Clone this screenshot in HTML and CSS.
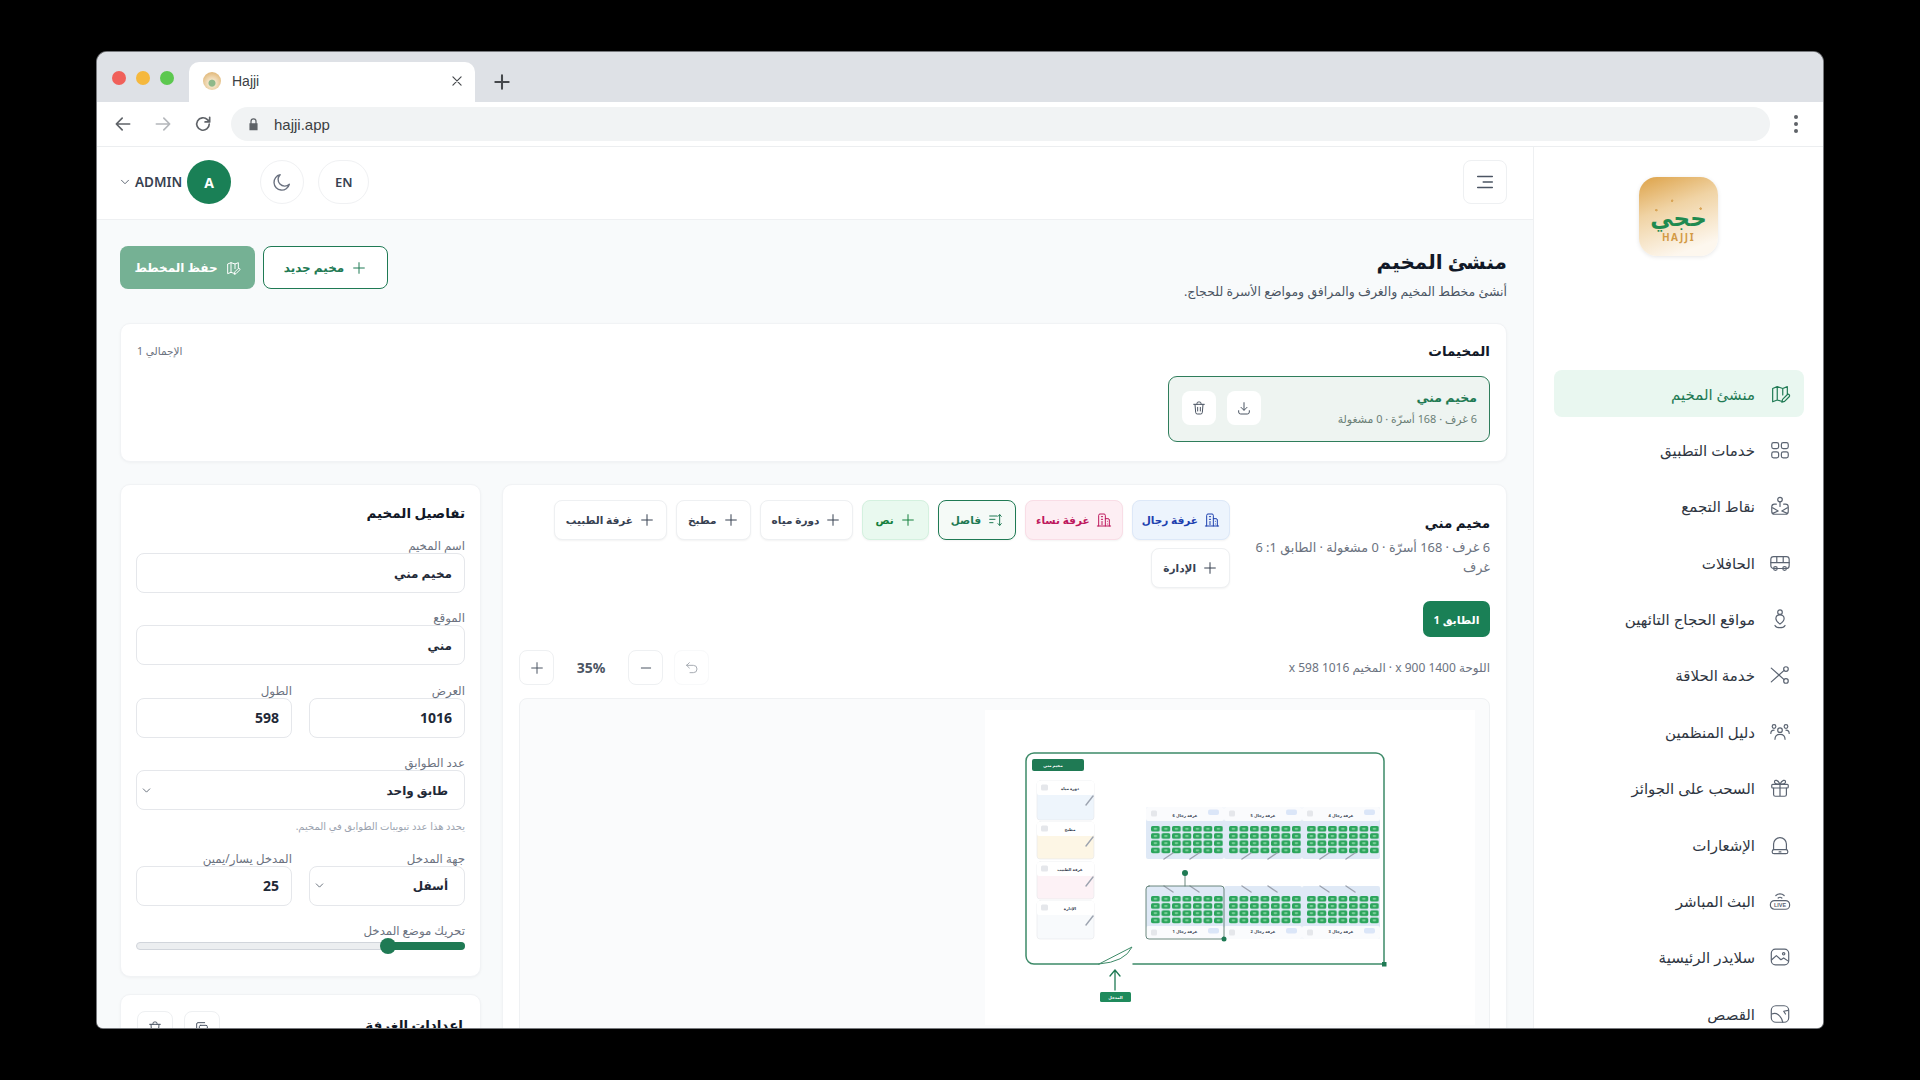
FILE: index.html
```html
<!DOCTYPE html>
<html lang="ar">
<head>
  <meta charset="UTF-8">
  <title>Hajji</title>
  <link rel="stylesheet" href="styles.css">
</head>
<body>
  <svg class="sprite" xmlns="http://www.w3.org/2000/svg">
    <symbol id="i-plus" viewBox="0 0 24 24"><path d="M12 4v16M4 12h16"/></symbol>
    <symbol id="i-map" viewBox="0 0 24 24"><path d="M15 20.5l-6-2-5 2V6l5-2 6 2 5-2v8M9 4v14.500M15 6v7M14 21l.8-3.200 5-5a1.500 1.500 0 0 1 2.200 2.200l-5 5z"/></symbol>
    <symbol id="i-building" viewBox="0 0 24 24"><path d="M4 21V5a2 2 0 0 1 2-2h6a2 2 0 0 1 2 2v16M14 10h4a2 2 0 0 1 2 2v9M2 21h20M8 7h2M8 11h2M8 15h2M8 18h2M17 14h0M17 18h0"/></symbol>
    <symbol id="i-chev" viewBox="0 0 24 24"><path d="M6 9l6 6 6-6"/></symbol>
  </svg>

  <div class="window">
    <div class="tabstrip">
      <div class="lights"><span class="light red"></span><span class="light yellow"></span><span class="light green"></span></div>
      <div class="tab">
        <span class="favicon"></span>
        <span class="tab-title">Hajji</span>
        <svg class="tab-close" viewBox="0 0 24 24"><path d="M5 5l14 14M19 5L5 19"/></svg>
      </div>
      <svg class="new-tab" viewBox="0 0 24 24"><use href="#i-plus"/></svg>
    </div>
    <div class="toolbar">
      <svg class="nav-btn" viewBox="0 0 24 24"><path d="M20 12H4M11 5l-7 7 7 7"/></svg>
      <svg class="nav-btn off" viewBox="0 0 24 24"><path d="M4 12h16M13 5l7 7-7 7"/></svg>
      <svg class="nav-btn" viewBox="0 0 24 24"><path d="M19.500 12a7.500 7.500 0 1 1-2.200-5.300L20 9.500M20 4v5.500h-5.500"/></svg>
      <div class="omnibox">
        <svg class="lock" viewBox="0 0 24 24"><path d="M7 10V7a5 5 0 0 1 10 0v3h1.500v11h-13V10zm2 0h6V7a3 3 0 0 0-6 0z"/></svg>
        <span>hajji.app</span>
      </div>
      <div class="dots"><i></i><i></i><i></i></div>
    </div>

    <div class="app" dir="rtl">
      <aside class="sidebar">
        <div class="logo">
          <span class="logo-ar">حجي</span>
          <span class="logo-en">HAJJI</span>
        </div>
        <nav class="nav">
          <a class="nav-item active">
            <svg class="icon" viewBox="0 0 24 24"><use href="#i-map"/></svg>منشئ المخيم
          </a>
          <a class="nav-item">
            <svg class="icon" viewBox="0 0 24 24"><rect x="3" y="4" width="7.500" height="6.500" rx="2"/><rect x="13.500" y="4" width="7.500" height="6.500" rx="2"/><rect x="3" y="14" width="7.500" height="6.500" rx="2"/><rect x="13.500" y="14" width="7.500" height="6.500" rx="2"/></svg>خدمات التطبيق
          </a>
          <a class="nav-item">
            <svg class="icon" viewBox="0 0 24 24"><circle cx="12" cy="5" r="2.500"/><path d="M12 7.500v5M8 10H6a3 3 0 0 0-3 3v5a3 3 0 0 0 3 3h12a3 3 0 0 0 3-3v-5a3 3 0 0 0-3-3h-2M4 14l6 3.500L4 20M20 14l-6 3.500 6 2.500"/></svg>نقاط التجمع
          </a>
          <a class="nav-item">
            <svg class="icon" viewBox="0 0 24 24"><rect x="2" y="5" width="20" height="13" rx="3"/><path d="M2 11.500h20M8.500 5v6.500M15.500 5v6.500"/><circle cx="7" cy="18" r="2"/><circle cx="17" cy="18" r="2"/></svg>الحافلات
          </a>
          <a class="nav-item">
            <svg class="icon" viewBox="0 0 24 24"><circle cx="12" cy="4.500" r="2.500"/><path d="M12 7.500c-3 0-4.500 2-4.500 4 0 2.500 3 5 4.500 6 1.500-1 4.500-3.500 4.500-6 0-2-1.500-4-4.500-4zM6.500 19c1 2 3.500 2.500 5.500 2.500s4.500-.5 5.500-2.500"/></svg>مواقع الحجاج التائهين
          </a>
          <a class="nav-item">
            <svg class="icon" viewBox="0 0 24 24"><circle cx="18.500" cy="5.500" r="2.500"/><circle cx="18.500" cy="18.500" r="2.500"/><path d="M2.500 4.500L16.500 17M2.500 19.500L16.500 7"/></svg>خدمة الحلاقة
          </a>
          <a class="nav-item">
            <svg class="icon" viewBox="0 0 24 24"><circle cx="12" cy="10" r="2.500"/><circle cx="5.500" cy="6" r="2"/><circle cx="18.500" cy="6" r="2"/><path d="M6.500 20c0-3.500 2.500-5.500 5.500-5.500s5.500 2 5.500 5.500M2 13.500c0-2 1.500-3.500 3.500-3.500M22 13.500c0-2-1.500-3.500-3.500-3.500"/></svg>دليل المنظمين
          </a>
          <a class="nav-item">
            <svg class="icon" viewBox="0 0 24 24"><rect x="3" y="8" width="18" height="4" rx="1"/><path d="M5 12v7a2 2 0 0 0 2 2h10a2 2 0 0 0 2-2v-7M12 8v13M12 8C10 3 6 2.500 6 5.500 6 7.500 9 8 12 8zM12 8c2-5 6-5.500 6-2.500C18 7.500 15 8 12 8z"/></svg>السحب على الجوائز
          </a>
          <a class="nav-item">
            <svg class="icon" viewBox="0 0 24 24"><path d="M5 17v-6a7 7 0 0 1 14 0v6M11 19.500h2"/><rect x="3.500" y="17" width="17" height="4.500" rx="2"/></svg>الإشعارات
          </a>
          <a class="nav-item">
            <svg class="icon" viewBox="0 0 24 24"><path d="M7.500 6a6.500 6.500 0 0 1 9 0M10 8.800a3 3 0 0 1 4 0"/><rect x="1.500" y="11.500" width="21" height="9.500" rx="4.500"/><text class="live" x="12" y="18.500">LIVE</text></svg>البث المباشر
          </a>
          <a class="nav-item">
            <svg class="icon" viewBox="0 0 24 24"><rect x="2.500" y="3.500" width="19" height="17" rx="4.500"/><circle cx="16" cy="8.500" r="1.300"/><path d="M3 15l5-4.500 5 4.500 3-2 5 3.500"/></svg>سلايدر الرئيسية
          </a>
          <a class="nav-item">
            <svg class="icon" viewBox="0 0 24 24"><rect x="2.500" y="3" width="19" height="18" rx="5"/><path d="M3 12c5-2 10 1 12 9M21 8l-5 1 2 3"/></svg>القصص
          </a>
        </nav>
      </aside>

      <div class="main">
        <header class="topbar">
          <button class="icon-btn menu-btn">
            <svg class="icon" viewBox="0 0 24 24"><path d="M4 6h16M10 12h10M4 18h16"/></svg>
          </button>
          <div class="top-actions" dir="ltr">
            <div class="user">
              <svg class="user-chev" viewBox="0 0 24 24"><use href="#i-chev"/></svg>
              <span class="user-name">ADMIN</span>
              <span class="avatar">A</span>
            </div>
            <button class="round-btn">
              <svg class="icon" viewBox="0 0 24 24"><path d="M20 14.500A8.500 8.500 0 1 1 10 4a7 7 0 0 0 10 10.500z"/></svg>
            </button>
            <button class="round-btn lang">EN</button>
          </div>
        </header>

        <div class="content">
          <div class="page-head">
            <div>
              <h1>منشئ المخيم</h1>
              <p class="page-sub">أنشئ مخطط المخيم والغرف والمرافق ومواضع الأسرة للحجاج.</p>
            </div>
            <div class="page-actions">
              <button class="btn btn-outline"><svg class="icon-sm" viewBox="0 0 24 24"><use href="#i-plus"/></svg>مخيم جديد</button>
              <button class="btn btn-solid"><svg class="icon-sm" viewBox="0 0 24 24"><use href="#i-map"/></svg>حفظ المخطط</button>
            </div>
          </div>

          <section class="card camps">
            <div class="camps-head">
              <h2>المخيمات</h2>
              <span class="total">الإجمالي 1</span>
            </div>
            <div class="camp-item">
              <div>
                <div class="camp-name">مخيم مني</div>
                <div class="camp-meta">6 غرف · 168 أسرّة · 0 مشغولة</div>
              </div>
              <div class="camp-actions">
                <button class="mini-btn"><svg class="icon-sm" viewBox="0 0 24 24"><path d="M12 4v11M7.500 11l4.500 4.500 4.500-4.500M4 16v2a3 3 0 0 0 3 3h10a3 3 0 0 0 3-3v-2"/></svg></button>
                <button class="mini-btn"><svg class="icon-sm" viewBox="0 0 24 24"><path d="M4 6.500h16M9 6.500V5a2 2 0 0 1 2-2h2a2 2 0 0 1 2 2v1.500M6 6.500l1 12a2.500 2.500 0 0 0 2.500 2.500h5a2.500 2.500 0 0 0 2.500-2.500l1-12M10 11v5.500M14 11v5.500"/></svg></button>
              </div>
            </div>
          </section>

          <div class="work">
            <section class="card builder">
              <div class="builder-head">
                <div class="builder-title">
                  <h2>مخيم مني</h2>
                  <p>6 غرف · 168 أسرّة · 0 مشغولة · الطابق 1: 6 غرف</p>
                </div>
                <div class="tools">
                  <button class="chip chip-men"><svg class="icon-sm" viewBox="0 0 24 24"><use href="#i-building"/></svg>غرفة رجال</button>
                  <button class="chip chip-women"><svg class="icon-sm" viewBox="0 0 24 24"><use href="#i-building"/></svg>غرفة نساء</button>
                  <button class="chip chip-divider"><svg class="icon-sm" viewBox="0 0 24 24"><path d="M4 6h11M4 11h8M4 16h5M19 4v16M16.500 6.500L19 4l2.500 2.500M16.500 17.500L19 20l2.500-2.500"/></svg>فاصل</button>
                  <button class="chip chip-text"><svg class="icon-sm" viewBox="0 0 24 24"><use href="#i-plus"/></svg>نص</button>
                  <button class="chip"><svg class="icon-sm" viewBox="0 0 24 24"><use href="#i-plus"/></svg>دورة مياه</button>
                  <button class="chip"><svg class="icon-sm" viewBox="0 0 24 24"><use href="#i-plus"/></svg>مطبخ</button>
                  <button class="chip"><svg class="icon-sm" viewBox="0 0 24 24"><use href="#i-plus"/></svg>غرفة الطبيب</button>
                  <button class="chip"><svg class="icon-sm" viewBox="0 0 24 24"><use href="#i-plus"/></svg>الإدارة</button>
                </div>
              </div>

              <button class="floor-tab">الطابق 1</button>

              <div class="zoom-row">
                <span class="canvas-size">اللوحة 1400 x 900 · المخيم 1016 x 598</span>
                <div class="zoom-ctrl">
                  <button class="zoom-btn ghost"><svg class="icon-sm" viewBox="0 0 24 24"><path d="M4 8l4-4M4 8l4 4M4 8h10a5.500 5.500 0 0 1 0 11H9"/></svg></button>
                  <button class="zoom-btn"><svg class="icon-sm" viewBox="0 0 24 24"><path d="M5 12h14"/></svg></button>
                  <span class="zoom-val">35%</span>
                  <button class="zoom-btn"><svg class="icon-sm" viewBox="0 0 24 24"><use href="#i-plus"/></svg></button>
                </div>
              </div>

              <div class="canvas-panel" dir="ltr">
                <div class="spacer"></div>
                <svg class="sheet" viewBox="0 0 490 315" width="490" height="315">
                  <defs>
                    <pattern id="bed-grid" width="10.500" height="7.200" patternUnits="userSpaceOnUse">
                      <rect x="0" y="0" width="8.800" height="5.600" rx="1.600" fill="#2ba55c"/>
                      <rect x="2.600" y="1.800" width="3.600" height="2" rx="1" fill="#7ccf9b"/>
                    </pattern>
                    <g id="room-t">
                      <rect width="78" height="52" rx="2" fill="#dfe9f6"/>
                      <rect width="78" height="14" rx="2" fill="#fafbfd"/>
                      <g transform="translate(5 19)"><rect width="72" height="28" fill="url(#bed-grid)"/></g>
                      <rect x="5" y="3.500" width="6" height="6" rx="1.500" fill="#e5e7eb"/>
                      <rect x="62" y="2.500" width="11" height="5.500" rx="2" fill="#dbe6f8"/>
                      <path class="door-mark" d="M18 52l9-6M44 52l9-6"/>
                    </g>
                    <g id="room-b">
                      <rect width="78" height="53" rx="2" fill="#dfe9f6"/>
                      <rect y="40" width="78" height="13" rx="2" fill="#fafbfd"/>
                      <g transform="translate(5 10)"><rect width="72" height="28" fill="url(#bed-grid)"/></g>
                      <rect x="5" y="43.500" width="6" height="6" rx="1.500" fill="#e5e7eb"/>
                      <rect x="62" y="42" width="11" height="5.500" rx="2" fill="#dbe6f8"/>
                      <path class="door-mark" d="M18 0l9 6M44 0l9 6"/>
                    </g>
                    <g id="facility-head">
                      <rect width="57" height="14" rx="2" fill="#fff"/>
                      <rect x="4" y="3.500" width="7" height="6" rx="1.500" fill="#e5e7eb"/>
                      <path class="door-mark" d="M49 24l7-9"/>
                    </g>
                  </defs>

                  <rect x="52" y="71" width="57" height="39" rx="3" class="facility" fill="#eef5fc"/><use href="#facility-head" x="52" y="71"/>
                  <rect x="52" y="112" width="57" height="37" rx="3" class="facility" fill="#fdf6e5"/><use href="#facility-head" x="52" y="112"/>
                  <rect x="52" y="152" width="57" height="37" rx="3" class="facility" fill="#fdf2f6"/><use href="#facility-head" x="52" y="152"/>
                  <rect x="52" y="191" width="57" height="38" rx="3" class="facility" fill="#f8fafc"/><use href="#facility-head" x="52" y="191"/>
                  <text class="t-room" x="85" y="80" >دورة مياه</text>
                  <text class="t-room" x="85" y="121">مطبخ</text>
                  <text class="t-room" x="85" y="161">غرفة الطبيب</text>
                  <text class="t-room" x="85" y="200">الإدارة</text>

                  <use href="#room-t" x="161" y="97"/><use href="#room-t" x="239" y="97"/><use href="#room-t" x="317" y="97"/>
                  <use href="#room-b" x="161" y="176"/><use href="#room-b" x="239" y="176"/><use href="#room-b" x="317" y="176"/>
                  <text class="t-room" x="200" y="107">غرفة رجال 6</text>
                  <text class="t-room" x="278" y="107">غرفة رجال 5</text>
                  <text class="t-room" x="356" y="107">غرفة رجال 4</text>
                  <text class="t-room" x="200" y="223">غرفة رجال 1</text>
                  <text class="t-room" x="278" y="223">غرفة رجال 2</text>
                  <text class="t-room" x="356" y="223">غرفة رجال 3</text>

                  <rect x="161" y="176" width="78" height="53" rx="3" class="selected"/>
                  <path class="selected" d="M200 176v-13"/>
                  <circle cx="200" cy="163" r="3" fill="#1f7a54"/>
                  <circle cx="239" cy="229" r="2.500" fill="#1f7a54"/>

                  <path class="camp-edge" d="M114 254H49a8 8 0 0 1-8-8V51a8 8 0 0 1 8-8H391a8 8 0 0 1 8 8V254H148"/>
                  <rect x="397" y="252" width="4.500" height="4.500" fill="#1f7a54"/>
                  <path class="door" d="M114 254L147 237Q140 252 114 254"/>
                  <rect x="47" y="49" width="52" height="12" rx="2" fill="#1f7a54"/>
                  <text class="t-tag" x="68" y="57">مخيم مني</text>
                  <path class="arrow" d="M130 280V260M125 266l5-6 5 6"/>
                  <rect x="115" y="282" width="31" height="10" rx="1.500" fill="#1f8a5c"/>
                  <text class="t-tag" x="130.500" y="289">المدخل</text>
                </svg>
              </div>
            </section>

            <div class="side-col">
              <section class="card details">
                <h2>تفاصيل المخيم</h2>
                <div class="field">
                  <label>اسم المخيم</label>
                  <input class="input" value="مخيم مني">
                </div>
                <div class="field">
                  <label>الموقع</label>
                  <input class="input" value="مني">
                </div>
                <div class="field-row">
                  <div class="field">
                    <label>العرض</label>
                    <input class="input num" value="1016">
                  </div>
                  <div class="field">
                    <label>الطول</label>
                    <input class="input num" value="598">
                  </div>
                </div>
                <div class="field">
                  <label>عدد الطوابق</label>
                  <div class="select">طابق واحد<svg viewBox="0 0 24 24"><use href="#i-chev"/></svg></div>
                  <p class="hint">يحدد هذا عدد تبويبات الطوابق في المخيم.</p>
                </div>
                <div class="field-row">
                  <div class="field">
                    <label>جهة المدخل</label>
                    <div class="select">أسفل<svg viewBox="0 0 24 24"><use href="#i-chev"/></svg></div>
                  </div>
                  <div class="field">
                    <label>المدخل يسار/يمين</label>
                    <input class="input num" value="25">
                  </div>
                </div>
                <div class="field last">
                  <label>تحريك موضع المدخل</label>
                  <div class="slider">
                    <div class="slider-fill" style="width: 23.500%"><span class="slider-thumb"></span></div>
                  </div>
                </div>
              </section>

              <section class="card room-settings">
                <h2>إعدادات الغرفة</h2>
                <div class="room-actions">
                  <button class="mini-btn bordered"><svg class="icon-sm" viewBox="0 0 24 24"><rect x="8" y="8" width="12" height="12" rx="2"/><path d="M4 16V6a2 2 0 0 1 2-2h10"/></svg></button>
                  <button class="mini-btn bordered"><svg class="icon-sm" viewBox="0 0 24 24"><path d="M4 6.500h16M9 6.500V5a2 2 0 0 1 2-2h2a2 2 0 0 1 2 2v1.500M6 6.500l1 14h10l1-14"/></svg></button>
                </div>
              </section>
            </div>
          </div>
        </div>
      </div>
    </div>
  </div>
</body>
</html>
```

FILE: styles.css
```css
* {
  box-sizing: border-box;
}
html, body {
  margin: 0;
  height: 100%;
}
body {
  background: #000;
  padding: 52px 0 0 97px;
  overflow: hidden;
  font-family: "Noto Sans", "DejaVu Sans", sans-serif;
  color: #1f2937;
}
button {
  font-family: inherit;
  background: none;
  border: none;
  padding: 0;
}
h1, h2, p {
  margin: 0;
}
svg {
  fill: none;
  stroke: currentColor;
  stroke-width: 1.5;
  stroke-linecap: round;
  stroke-linejoin: round;
}
.sprite {
  display: none;
}

/* browser frame */
.window {
  width: 1726px;
  height: 976px;
  background: #fff;
  border-radius: 10px 10px 6px 6px;
  box-shadow: 0 0 0 1px #77797d;
  overflow: hidden;
  display: flex;
  flex-direction: column;
}
.tabstrip {
  height: 50px;
  background: #dee1e6;
  display: flex;
  align-items: flex-end;
  padding-left: 15px;
  flex-shrink: 0;
}
.lights {
  display: flex;
  gap: 10px;
  margin: 0 15px 17px 0;
}
.light {
  width: 14px;
  height: 14px;
  border-radius: 50%;
}
.red { background: #f0605a; }
.yellow { background: #f5b83d; }
.green { background: #5cc84f; }
.tab {
  width: 286px;
  height: 40px;
  background: #fff;
  border-radius: 10px 10px 0 0;
  display: flex;
  align-items: center;
  padding: 0 11px 2px 14px;
  font-family: "Liberation Sans", sans-serif;
  font-size: 14px;
  color: #3c4043;
}
.favicon {
  width: 18px;
  height: 18px;
  border-radius: 50%;
  background: radial-gradient(circle at 50% 62%, #8fb98a 0 3px, #f3e2c4 4px, #d9a557 100%);
  margin-right: 11px;
}
.tab-title {
  flex: 1;
}
.tab-close {
  width: 14px;
  height: 14px;
  stroke-width: 2;
  color: #45484c;
}
.new-tab {
  width: 20px;
  height: 20px;
  margin: 0 0 10px 17px;
  stroke-width: 2.5;
  color: #45484c;
}
.toolbar {
  height: 45px;
  flex-shrink: 0;
  background: #fff;
  border-bottom: 1px solid #eceef0;
  display: flex;
  align-items: center;
  padding: 0 25px 0 16px;
  gap: 20px;
}
.nav-btn {
  width: 20px;
  height: 20px;
  stroke-width: 2;
  color: #5f6368;
}
.nav-btn.off {
  color: #b4b7bb;
}
.omnibox {
  flex: 1;
  height: 34px;
  margin-left: -2px;
  margin-right: 4px;
  background: #f1f3f4;
  border-radius: 17px;
  display: flex;
  align-items: center;
  padding-left: 15px;
  font-family: "Liberation Sans", sans-serif;
  font-size: 15px;
  color: #3c4043;
}
.lock {
  width: 15px;
  height: 15px;
  margin-right: 13px;
  stroke: none;
  fill: #5f6368;
  fill-rule: evenodd;
}
.dots {
  display: flex;
  flex-direction: column;
  gap: 3px;
}
.dots i {
  width: 4px;
  height: 4px;
  border-radius: 50%;
  background: #5f6368;
}

/* app shell */
.app {
  flex: 1;
  display: flex;
  min-height: 0;
}
.sidebar {
  width: 290px;
  flex-shrink: 0;
  background: #fff;
  border-left: 1px solid #eef0f2;
  overflow: hidden;
  padding-top: 30px;
}
.logo {
  width: 79px;
  height: 79px;
  margin: 0 auto;
  border-radius: 18px;
  background:
    radial-gradient(circle at 22% 42%, #d9a557 0 1px, transparent 1.5px),
    radial-gradient(circle at 78% 40%, #d9a557 0 1px, transparent 1.5px),
    radial-gradient(circle at 42% 30%, #d9a557 0 1px, transparent 1.5px),
    linear-gradient(160deg, #dda248 0%, #f0d3a4 38%, #fdf7ee 85%);
  display: flex;
  flex-direction: column;
  align-items: center;
  justify-content: flex-end;
  padding-bottom: 13px;
  box-shadow: 0 1px 4px #0000001a;
}
.logo-ar {
  font-family: "DejaVu Sans", sans-serif;
  font-size: 23px;
  font-weight: bold;
  line-height: 28px;
  color: #1f8a50;
}
.logo-en {
  font-size: 10px;
  font-weight: 700;
  line-height: 11px;
  letter-spacing: 1.5px;
  color: #d39a45;
}
.nav {
  margin-top: 114px;
  padding: 0 19px 0 20px;
  display: flex;
  flex-direction: column;
  gap: 9.400px;
}
.nav-item {
  height: 47px;
  flex-shrink: 0;
  display: flex;
  align-items: center;
  gap: 14px;
  padding-right: 13px;
  border-radius: 8px;
  font-size: 15px;
  font-weight: 500;
  color: #2f3642;
}
.nav-item .icon {
  color: #5b6472;
  stroke-width: 1.3;
}
.nav-item.active {
  background: #e9f7f0;
  color: #1f7a54;
}
.nav-item.active .icon {
  color: #1f7a54;
}
.icon {
  width: 22px;
  height: 22px;
  flex-shrink: 0;
}
.icon-sm {
  width: 16px;
  height: 16px;
  flex-shrink: 0;
}
.live {
  font-family: "Liberation Sans", sans-serif;
  font-size: 6px;
  font-weight: bold;
  text-anchor: middle;
  stroke: none;
  fill: currentColor;
}

.main {
  flex: 1;
  min-width: 0;
  background: #f8fafb;
  overflow: hidden;
}
.topbar {
  height: 73px;
  background: #fff;
  border-bottom: 1px solid #eef0f2;
  display: flex;
  align-items: center;
  justify-content: space-between;
  padding: 0 26px 2px 21px;
}
.icon-btn {
  width: 44px;
  height: 44px;
  border: 1px solid #eef0f2;
  border-radius: 8px;
  color: #4b5563;
  display: flex;
  align-items: center;
  justify-content: center;
}
.top-actions {
  display: flex;
  align-items: center;
  gap: 14px;
}
.user {
  display: flex;
  align-items: center;
  margin-right: 15px;
}
.user-chev {
  width: 14px;
  height: 14px;
  color: #4b5563;
  margin-right: 3px;
}
.user-name {
  font-size: 13.500px;
  font-weight: 600;
  color: #374151;
  margin-right: 5px;
}
.avatar {
  width: 44px;
  height: 44px;
  border-radius: 50%;
  background: #1a8056;
  color: #fff;
  font-size: 14px;
  font-weight: 700;
  display: flex;
  align-items: center;
  justify-content: center;
}
.round-btn {
  width: 44px;
  height: 44px;
  border: 1px solid #f0f1f3;
  border-radius: 50%;
  color: #6b7280;
  display: flex;
  align-items: center;
  justify-content: center;
}
.round-btn.lang {
  width: 51px;
  border-radius: 22px;
  font-size: 13px;
  font-weight: 600;
  color: #374151;
}

/* page */
.content {
  padding: 26px 26px 0 23px;
}
.page-head {
  height: 57px;
  margin-bottom: 20px;
  display: flex;
  justify-content: space-between;
}
h1 {
  font-size: 20px;
  font-weight: 700;
  line-height: 31px;
  color: #111827;
}
.page-sub {
  margin-top: 3px;
  font-size: 12.500px;
  line-height: 24px;
  color: #4b5563;
}
.page-actions {
  display: flex;
  gap: 8px;
}
.btn {
  height: 43px;
  border-radius: 8px;
  display: flex;
  align-items: center;
  justify-content: center;
  gap: 7px;
  font-size: 12px;
  font-weight: 700;
}
.btn-outline {
  width: 125px;
  border: 1px solid #1f7a54;
  color: #1f7a54;
  background: #fff;
}
.btn-solid {
  width: 135px;
  background: #75b194;
  color: #fff;
}
.card {
  background: #fff;
  border: 1px solid #f1f3f5;
  border-radius: 10px;
  box-shadow: 0 1px 3px #0000000a;
}
h2 {
  font-size: 13.500px;
  font-weight: 700;
  line-height: 22px;
  color: #111827;
}
.camps {
  height: 139px;
  padding: 16px 16px 0;
}
.camps-head {
  display: flex;
  justify-content: space-between;
  align-items: center;
  margin-bottom: 14px;
}
.total {
  font-size: 10.500px;
  color: #6b7280;
}
.camp-item {
  width: 322px;
  height: 66px;
  background: #eef4f1;
  border: 1px solid #2f7d5b;
  border-radius: 9px;
  display: flex;
  align-items: center;
  justify-content: space-between;
  padding: 0 12px 2px 13px;
}
.camp-name {
  font-size: 12.500px;
  font-weight: 700;
  line-height: 21px;
  color: #1f7a54;
}
.camp-meta {
  margin-top: 1.500px;
  font-size: 10.900px;
  line-height: 20px;
  color: #6b7f76;
}
.camp-actions {
  display: flex;
  gap: 11px;
}
.mini-btn {
  width: 34px;
  height: 34px;
  background: #fff;
  border-radius: 8px;
  color: #4b5563;
  display: flex;
  align-items: center;
  justify-content: center;
}
.work {
  margin-top: 22px;
  display: grid;
  grid-template-columns: 1005px 361px;
  gap: 21px;
  align-items: start;
}
.builder {
  height: 600px;
  padding: 15px 16px 0;
}
.builder-head {
  display: flex;
  gap: 24px;
}
.builder-title {
  width: 236px;
  flex-shrink: 0;
}
.builder-title h2 {
  line-height: 24px;
  margin-top: 11px;
}
.builder-title p {
  font-size: 12.800px;
  line-height: 20px;
  margin-top: 2px;
  color: #6b7280;
}
.tools {
  flex: 1;
  display: flex;
  flex-wrap: wrap;
  gap: 8px 9px;
}
.chip {
  height: 40px;
  padding: 0 11px;
  border: 1px solid #eef0f2;
  border-radius: 8px;
  background: #fff;
  box-shadow: 0 1px 2px #0000000d;
  display: flex;
  align-items: center;
  gap: 6px;
  font-size: 10.500px;
  font-weight: 700;
  color: #374151;
}
.chip-men {
  padding: 0 9px;
  background: #edf4fd;
  border-color: #dde8f8;
  color: #1e40af;
}
.chip-women {
  padding: 0 10px;
  background: #fdeef3;
  border-color: #f9dde6;
  color: #be185d;
}
.chip-divider {
  padding: 0 12px;
  background: #f5faf7;
  border-color: #1f7a54;
  color: #1f7a54;
}
.chip-text {
  padding: 0 12px;
  background: #e9f9ef;
  border-color: #d4f1df;
  color: #15803d;
}
.floor-tab {
  display: block;
  width: 67px;
  height: 36px;
  margin-top: 13px;
  border-radius: 7px;
  background: #1a8056;
  color: #fff;
  font-size: 11px;
  font-weight: 700;
}
.zoom-row {
  margin-top: 13px;
  height: 35px;
  display: flex;
  align-items: center;
  justify-content: space-between;
}
.canvas-size {
  font-size: 12px;
  color: #6b7280;
}
.zoom-ctrl {
  display: flex;
  align-items: center;
  gap: 11px;
}
.zoom-btn {
  width: 35px;
  height: 35px;
  border: 1px solid #eef0f2;
  border-radius: 8px;
  background: #fff;
  color: #4b5563;
  display: flex;
  align-items: center;
  justify-content: center;
}
.zoom-btn.ghost {
  border-color: #f8f9fa;
  color: #a8adb4;
}
.zoom-val {
  width: 52px;
  text-align: center;
  font-size: 14px;
  font-weight: 700;
  color: #4b5563;
}
.canvas-panel {
  margin-top: 13px;
  height: 340px;
  background: #fafbfc;
  border: 1px solid #eff1f3;
  border-radius: 8px 8px 0 0;
  display: flex;
  padding: 11px 14px 0 0;
}
.spacer {
  flex: 1;
}
.sheet {
  background: #fff;
  flex-shrink: 0;
  stroke: none;
}
.facility {
  stroke: #e5e7eb;
  stroke-width: 0.6;
}
.door-mark {
  stroke: #9ca3af;
  stroke-width: 1.4;
}
.selected {
  fill: none;
  stroke: #5b7c70;
  stroke-width: 0.9;
}
.camp-edge {
  fill: none;
  stroke: #3d8a68;
  stroke-width: 1.5;
}
.door {
  fill: #fff;
  stroke: #3d8a68;
  stroke-width: 1;
}
.arrow {
  fill: none;
  stroke: #1f7a54;
  stroke-width: 1.3;
}
.t-room, .t-tag {
  font-size: 4px;
  font-weight: bold;
  text-anchor: middle;
  stroke: none;
}
.t-room {
  fill: #374151;
}
.t-tag {
  fill: #fff;
}

/* right form column */
.side-col {
  display: flex;
  flex-direction: column;
  gap: 17px;
}
.details {
  height: 493px;
  padding: 17px 15px 0 15px;
}
.details h2 {
  margin-bottom: 14px;
}
.field {
  flex: 1;
  margin-bottom: 17.400px;
}
.field.last {
  margin-bottom: 0;
}
.field label {
  display: block;
  font-size: 11.800px;
  line-height: 14px;
  margin-bottom: 1px;
  color: #6b7280;
}
.field-row {
  display: flex;
  gap: 17px;
}
.input, .select {
  display: block;
  width: 100%;
  height: 40px;
  border: 1px solid #e5e7eb;
  border-radius: 8px;
  background: #fff;
  padding: 0 12px;
  font-family: inherit;
  font-size: 12px;
  font-weight: 600;
  color: #1f2937;
  text-align: right;
}
.input.num {
  font-size: 14px;
  font-weight: 700;
}
.select {
  display: flex;
  align-items: center;
  justify-content: space-between;
  padding: 0 16px 0 3px;
}
.select svg {
  width: 13px;
  height: 13px;
  color: #4b5563;
}
.hint {
  margin: 9px 0 6px;
  font-size: 10px;
  line-height: 14px;
  color: #9ca3af;
}
.slider {
  height: 8px;
  margin-top: 5px;
  border: 1px solid #d1d5db;
  border-radius: 4px;
  background: #eceef0;
}
.slider-fill {
  position: relative;
  height: 8px;
  margin: -1px -1px 0 0;
  border-radius: 4px;
  background: #1f7a54;
}
.slider-thumb {
  position: absolute;
  left: -8px;
  top: -4px;
  width: 16px;
  height: 16px;
  border-radius: 50%;
  background: #1f7a54;
}
.room-settings {
  height: 80px;
  padding: 16px 17px 0 16px;
  display: flex;
  justify-content: space-between;
  align-items: flex-start;
}
.room-settings h2 {
  margin-top: 3px;
}
.room-actions {
  display: flex;
  gap: 11px;
}
.mini-btn.bordered {
  width: 36px;
  border: 1px solid #eef0f2;
}
```
